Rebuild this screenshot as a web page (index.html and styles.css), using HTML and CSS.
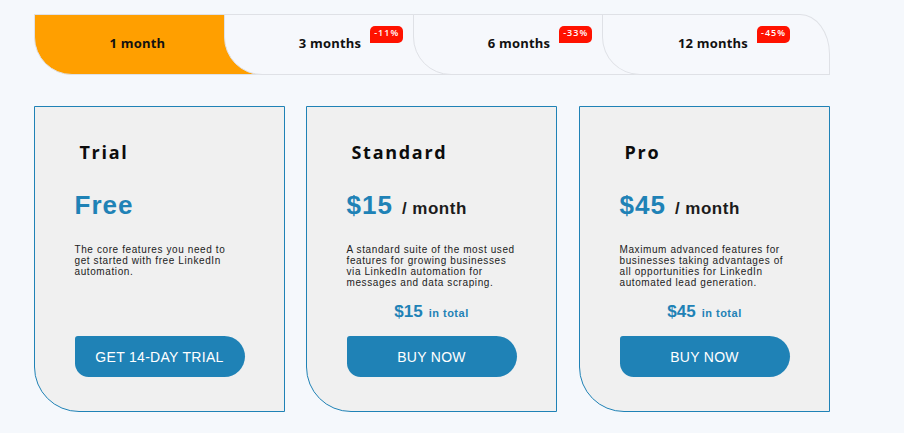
FILE: index.html
```html
<!DOCTYPE html>
<html lang="en">
<head>
<meta charset="utf-8">
<title>Pricing</title>
<link rel="stylesheet" href="styles.css">
</head>
<body>
<div class="page">
  <div class="tabs">
    <div class="tab tab-first tab-active"><span class="label">1 month</span></div>
    <div class="tab"><span class="label">3 months<span class="badge">-11%</span></span></div>
    <div class="tab"><span class="label">6 months<span class="badge">-33%</span></span></div>
    <div class="tab tab-last"><span class="label">12 months<span class="badge">-45%</span></span></div>
  </div>
  <div class="cards">
    <div class="card">
      <h2 class="plan">Trial</h2>
      <div class="price">Free</div>
      <p class="desc">The core features you need to<br>get started with free LinkedIn<br>automation.</p>
      <a class="btn">GET 14-DAY TRIAL</a>
    </div>
    <div class="card">
      <h2 class="plan">Standard</h2>
      <div class="price">$15<span class="per">/ month</span></div>
      <p class="desc">A standard suite of the most used<br>features for growing businesses<br>via LinkedIn automation for<br>messages and data scraping.</p>
      <div class="total">$15<span class="in">in total</span></div>
      <a class="btn">BUY NOW</a>
    </div>
    <div class="card">
      <h2 class="plan">Pro</h2>
      <div class="price">$45<span class="per">/ month</span></div>
      <p class="desc">Maximum advanced features for<br>businesses taking advantages of<br>all opportunities for LinkedIn<br>automated lead generation.</p>
      <div class="total">$45<span class="in">in total</span></div>
      <a class="btn">BUY NOW</a>
    </div>
  </div>
</div>
</body>
</html>
```

FILE: styles.css
```css
html, body {
  margin: 0;
  padding: 0;
}
body {
  background: #f5f8fc;
  width: 904px;
  height: 433px;
  overflow: hidden;
}
.page {
  padding: 14px 0 0 34px;
}
.tabs {
  display: flex;
  height: 61px;
}
.tab {
  box-sizing: border-box;
  width: 229px;
  height: 61px;
  margin-left: -40px;
  padding: 0 40px 3px 23px;
  border: 1px solid #dfe1e6;
  border-bottom-left-radius: 38px;
  background: #f6f8fc;
  display: flex;
  align-items: center;
  justify-content: center;
  font-family: "Open Sans", "DejaVu Sans", sans-serif;
  font-weight: 700;
  font-size: 13px;
  letter-spacing: 0.2px;
  color: #111;
}
.tab-first {
  margin-left: 0;
  width: 230px;
  padding-left: 17px;
}
.tab-active {
  background: #ff9f00;
}
.tab-last {
  width: 228px;
  padding: 0 6px 3px 0;
  border-top-right-radius: 30px 40px;
}
.label {
  position: relative;
  line-height: 18px;
  white-space: nowrap;
}
.badge {
  position: absolute;
  left: calc(100% + 9px);
  top: -8px;
  height: 17px;
  box-sizing: border-box;
  padding: 0 4px 3px 4px;
  background: #ff1200;
  color: #fff;
  font-size: 9px;
  font-weight: 600;
  letter-spacing: 1px;
  line-height: 14px;
  border-radius: 5px 5px 5px 0;
}
.cards {
  display: flex;
  gap: 21px;
  margin-top: 31px;
}
.card {
  box-sizing: border-box;
  width: 251px;
  height: 306px;
  border: 1px solid #1f82b6;
  border-bottom-left-radius: 45px;
  background: #f0f0f0;
  padding: 34px 0 34px 39.5px;
  display: flex;
  flex-direction: column;
  align-items: flex-start;
  font-family: "Liberation Sans", Arial, sans-serif;
}
.card:last-child {
  margin-left: 1px;
}
.plan {
  margin: 0 0 0 5px;
  font-family: "Open Sans", "DejaVu Sans", sans-serif;
  font-weight: 700;
  font-size: 18px;
  line-height: 23px;
  letter-spacing: 1.7px;
  color: #0c0c0c;
}
.price {
  margin-top: 26px;
  font-size: 26px;
  font-weight: 700;
  line-height: 30px;
  letter-spacing: 1px;
  color: #1f82b6;
  white-space: nowrap;
}
.per {
  margin-left: 9px;
  font-size: 17px;
  line-height: 17px;
  letter-spacing: 0.5px;
  color: #1c1c1c;
}
.desc {
  margin: 23.5px 0 0 0;
  font-size: 10px;
  line-height: 11px;
  letter-spacing: 0.6px;
  color: #222;
  white-space: nowrap;
}
.total {
  align-self: stretch;
  margin: 14.5px 0 0 -39.5px;
  text-align: center;
  font-size: 17px;
  font-weight: 700;
  line-height: 20px;
  color: #1f82b6;
}
.in {
  margin-left: 6px;
  font-size: 11px;
  line-height: 11px;
  letter-spacing: 0.5px;
}
.btn {
  margin-top: auto;
  box-sizing: border-box;
  width: 170px;
  height: 41px;
  background: #1f82b6;
  color: #fff;
  border-radius: 3px 21px 21px 14px;
  display: flex;
  align-items: center;
  justify-content: center;
  font-size: 14px;
  letter-spacing: 0.3px;
  cursor: pointer;
}
```
